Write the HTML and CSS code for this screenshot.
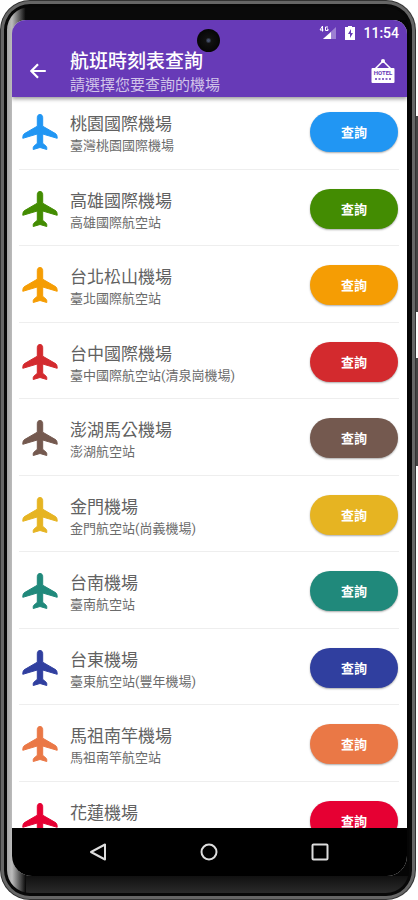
FILE: index.html
```html
<!DOCTYPE html>
<html lang="zh-Hant">
<head>
<meta charset="utf-8">
<meta name="viewport" content="width=device-width, initial-scale=1">
<title>航班時刻表查詢</title>
<link rel="stylesheet" href="styles.css">
</head>
<body>
<svg class="sprite" aria-hidden="true">
  <symbol id="plane" viewBox="0 0 36 36">
    <path d="M18 0.5c-1.800 0-2.700 1.300-2.700 3v8.700L3 19.300C1.300 20.400.8 21.500.8 24.300l14.500-4.300v9.300l-3.500 3c-.6.6-.6 1.300-.6 3.200L18 33.500l6.800 2c0-1.900 0-2.600-.6-3.200l-3.500-3V20l14.500 4.300c0-2.800-.5-3.900-2.200-5L20.700 12.200V3.500c0-1.700-.9-3-2.700-3z" stroke-width="1" stroke-linejoin="round"/>
  </symbol>
</svg>
<div class="phone">
  <span class="camera"></span>
  <span class="side-key power"></span>
  <span class="side-key volume"></span>
  <div class="screen">
    <header class="top">
      <div class="status">
        <svg class="signal" viewBox="0 0 18 16" aria-hidden="true">
          <path d="M17 2v12H4z" fill="#9c7fd2"/>
          <path d="M12 7v7H4z" fill="#fff"/>
          <path d="M3.500 1v5.500M3.500 1L1 5h3.500M9 2H6.500v3.500H9V4H8" fill="none" stroke="#fff"/>
        </svg>
        <svg class="battery" viewBox="0 0 10 16" aria-hidden="true">
          <path d="M3 1h4v1h3v13H0V2h3z" fill="#fff"/>
          <path d="M6 4L3 9h2v4l3-5H6z" fill="#673ab7"/>
        </svg>
        <span>11:54</span>
      </div>
      <div class="toolbar">
        <button class="icon-button" aria-label="返回">
          <svg class="back" viewBox="0 0 18 18"><path d="M16 9H3M9 3L3 9l6 6" fill="none" stroke="#fff" stroke-width="2"/></svg>
        </button>
        <div class="titles">
          <h1>航班時刻表查詢</h1>
          <p>請選擇您要查詢的機場</p>
        </div>
        <button class="icon-button" aria-label="HOTEL">
          <svg class="hotel" viewBox="0 0 24 26">
            <path d="M4 11l8-8 8 8" fill="none" stroke="#fff" stroke-width="1.500"/>
            <circle cx="12" cy="3" r="2" fill="#fff"/>
            <rect x="0.500" y="10" width="23" height="15" rx="1" fill="#fff"/>
            <text class="hotel-text" x="12" y="17" text-anchor="middle">HOTEL</text>
            <path d="M4 21h16" stroke="#673ab7" stroke-width="1.500" stroke-dasharray="2 1.500"/>
          </svg>
        </button>
      </div>
    </header>
    <main>
      <ul class="airports">
        <li class="blue"><svg class="plane"><use href="#plane"/></svg><div class="names"><h2>桃園國際機場</h2><p>臺灣桃園國際機場</p></div><button class="query">查詢</button></li>
        <li class="green"><svg class="plane"><use href="#plane"/></svg><div class="names"><h2>高雄國際機場</h2><p>高雄國際航空站</p></div><button class="query">查詢</button></li>
        <li class="amber"><svg class="plane"><use href="#plane"/></svg><div class="names"><h2>台北松山機場</h2><p>臺北國際航空站</p></div><button class="query">查詢</button></li>
        <li class="red"><svg class="plane"><use href="#plane"/></svg><div class="names"><h2>台中國際機場</h2><p>臺中國際航空站(清泉崗機場)</p></div><button class="query">查詢</button></li>
        <li class="brown"><svg class="plane"><use href="#plane"/></svg><div class="names"><h2>澎湖馬公機場</h2><p>澎湖航空站</p></div><button class="query">查詢</button></li>
        <li class="yellow"><svg class="plane"><use href="#plane"/></svg><div class="names"><h2>金門機場</h2><p>金門航空站(尚義機場)</p></div><button class="query">查詢</button></li>
        <li class="teal"><svg class="plane"><use href="#plane"/></svg><div class="names"><h2>台南機場</h2><p>臺南航空站</p></div><button class="query">查詢</button></li>
        <li class="indigo"><svg class="plane"><use href="#plane"/></svg><div class="names"><h2>台東機場</h2><p>臺東航空站(豐年機場)</p></div><button class="query">查詢</button></li>
        <li class="orange"><svg class="plane"><use href="#plane"/></svg><div class="names"><h2>馬祖南竿機場</h2><p>馬祖南竿航空站</p></div><button class="query">查詢</button></li>
        <li class="crimson"><svg class="plane"><use href="#plane"/></svg><div class="names"><h2>花蓮機場</h2></div><button class="query">查詢</button></li>
      </ul>
    </main>
    <nav class="system">
      <button aria-label="返回"><svg viewBox="0 0 18 18"><path d="M16 1.500v15L2 9z"/></svg></button>
      <button aria-label="主畫面"><svg viewBox="0 0 18 18"><circle cx="9" cy="9" r="7.500"/></svg></button>
      <button aria-label="最近使用"><svg viewBox="0 0 18 18"><rect x="1.500" y="1.500" width="15" height="15" rx="1"/></svg></button>
    </nav>
  </div>
</div>
</body>
</html>
```
FILE: styles.css
```css
* {
  box-sizing: border-box;
}

body {
  margin: 0;
  background: #fff;
  font-family: Roboto, "Noto Sans CJK TC", sans-serif;
}

h1, h2, p, ul {
  margin: 0;
  padding: 0;
  font-weight: 400;
}

button {
  border: 0;
  padding: 0;
  font: inherit;
  background: none;
}

svg {
  display: block;
}

.sprite {
  position: absolute;
  width: 0;
  height: 0;
}

/* Device body */
.phone {
  position: relative;
  height: 100vh;
  margin-right: 2px;
  padding: 20px 9px 24px 12px;
  border-radius: 30px;
  background:
    linear-gradient(to bottom, #0a0a0a 0, #0a0a0a 20px, transparent 20px) 26px 0 / 100% 100% no-repeat,
    linear-gradient(to bottom, transparent calc(100% - 24px), #111 calc(100% - 24px), #2c2c2c calc(100% - 6px)) 26px 0 / 100% 100% no-repeat,
    linear-gradient(to right, #888 0, #bbb 12px, #050505 26px);
  box-shadow: inset 0 0 0 1px #333, inset 0 0 0 4px #666, inset 0 0 0 7px #080808;
}

.camera {
  position: absolute;
  z-index: 2;
  top: 29px;
  left: calc(50% - 11px);
  width: 23px;
  height: 23px;
  border-radius: 50%;
  background: radial-gradient(circle, #46506a 0, #46506a 1px, #111 3px, #050505 12px);
}

.side-key {
  position: absolute;
  right: -2px;
  width: 2px;
  background: #444;
}

.power {
  top: 116px;
  height: 196px;
}

.volume {
  top: 358px;
  height: 108px;
}

.screen {
  display: flex;
  flex-direction: column;
  height: 100%;
  border-radius: 14px 14px 20px 20px;
  background: #fff;
  overflow: hidden;
}

/* App bar */
.top {
  position: relative;
  flex: none;
  color: #fff;
  background: #673ab7;
  box-shadow: 0 2px 4px #0006;
}

.status {
  display: flex;
  justify-content: flex-end;
  align-items: center;
  gap: 8px;
  height: 25px;
  padding-right: 8px;
  font-size: 14px;
  font-weight: 500;
}

.signal {
  width: 18px;
  height: 16px;
}

.battery {
  width: 10px;
  height: 16px;
}

.toolbar {
  display: flex;
  align-items: center;
  height: 52px;
  padding: 0 12px 0 16px;
}

.icon-button {
  flex: none;
}

.back {
  width: 20px;
  height: 20px;
}

.hotel {
  width: 24px;
  height: 26px;
}

.hotel-text {
  font-size: 6px;
  font-weight: 700;
  fill: #673ab7;
}

.titles {
  flex: 1;
  padding: 4px 0 0 22px;
}

h1 {
  font-size: 19px;
  font-weight: 500;
  line-height: 24px;
}

.titles p {
  color: #d1c4e9;
  font-size: 15px;
  line-height: 22px;
}

/* Airport list */
main {
  flex: 1;
  min-height: 0;
  overflow: hidden;
}

.airports {
  padding: 0 8px 0 7px;
  list-style: none;
}

.airports li {
  display: flex;
  align-items: flex-start;
  height: 77px;
  padding: 17px 1px 0 3px;
  border-bottom: 1px solid #eee;
}

.airports li:nth-child(even) {
  height: 76px;
}

.airports li:first-child {
  height: 73px;
  padding-top: 13px;
}

.plane {
  flex: none;
  width: 36px;
  height: 36px;
  margin-top: 4px;
  fill: var(--tone);
  stroke: var(--tone);
}

.names {
  flex: 1;
  padding: 1px 0 0 12px;
}

h2 {
  color: #616161;
  font-size: 17px;
  line-height: 26px;
}

.names p {
  color: #6b6b6b;
  font-size: 13px;
  line-height: 18px;
}

.query {
  flex: none;
  width: 88px;
  height: 40px;
  margin-top: 2px;
  padding-bottom: 2px;
  border-radius: 20px;
  color: #fff;
  background: var(--tone);
  box-shadow: 0 1px 2px #0005;
  font-size: 13px;
  font-weight: 700;
}

.blue { --tone: #2196f3; }
.green { --tone: #438c02; }
.amber { --tone: #f59d04; }
.red { --tone: #d32a2e; }
.brown { --tone: #74594f; }
.yellow { --tone: #e6b422; }
.teal { --tone: #20897b; }
.indigo { --tone: #303f9f; }
.orange { --tone: #ea7846; }
.crimson { --tone: #e60033; }

/* System navigation */
.system {
  display: flex;
  flex: none;
  justify-content: space-between;
  align-items: center;
  height: 48px;
  padding: 0 78px 0 77px;
  background: #000;
}

.system svg {
  width: 18px;
  height: 18px;
  fill: none;
  stroke: #ddd;
  stroke-width: 2;
  stroke-linejoin: round;
}
```
